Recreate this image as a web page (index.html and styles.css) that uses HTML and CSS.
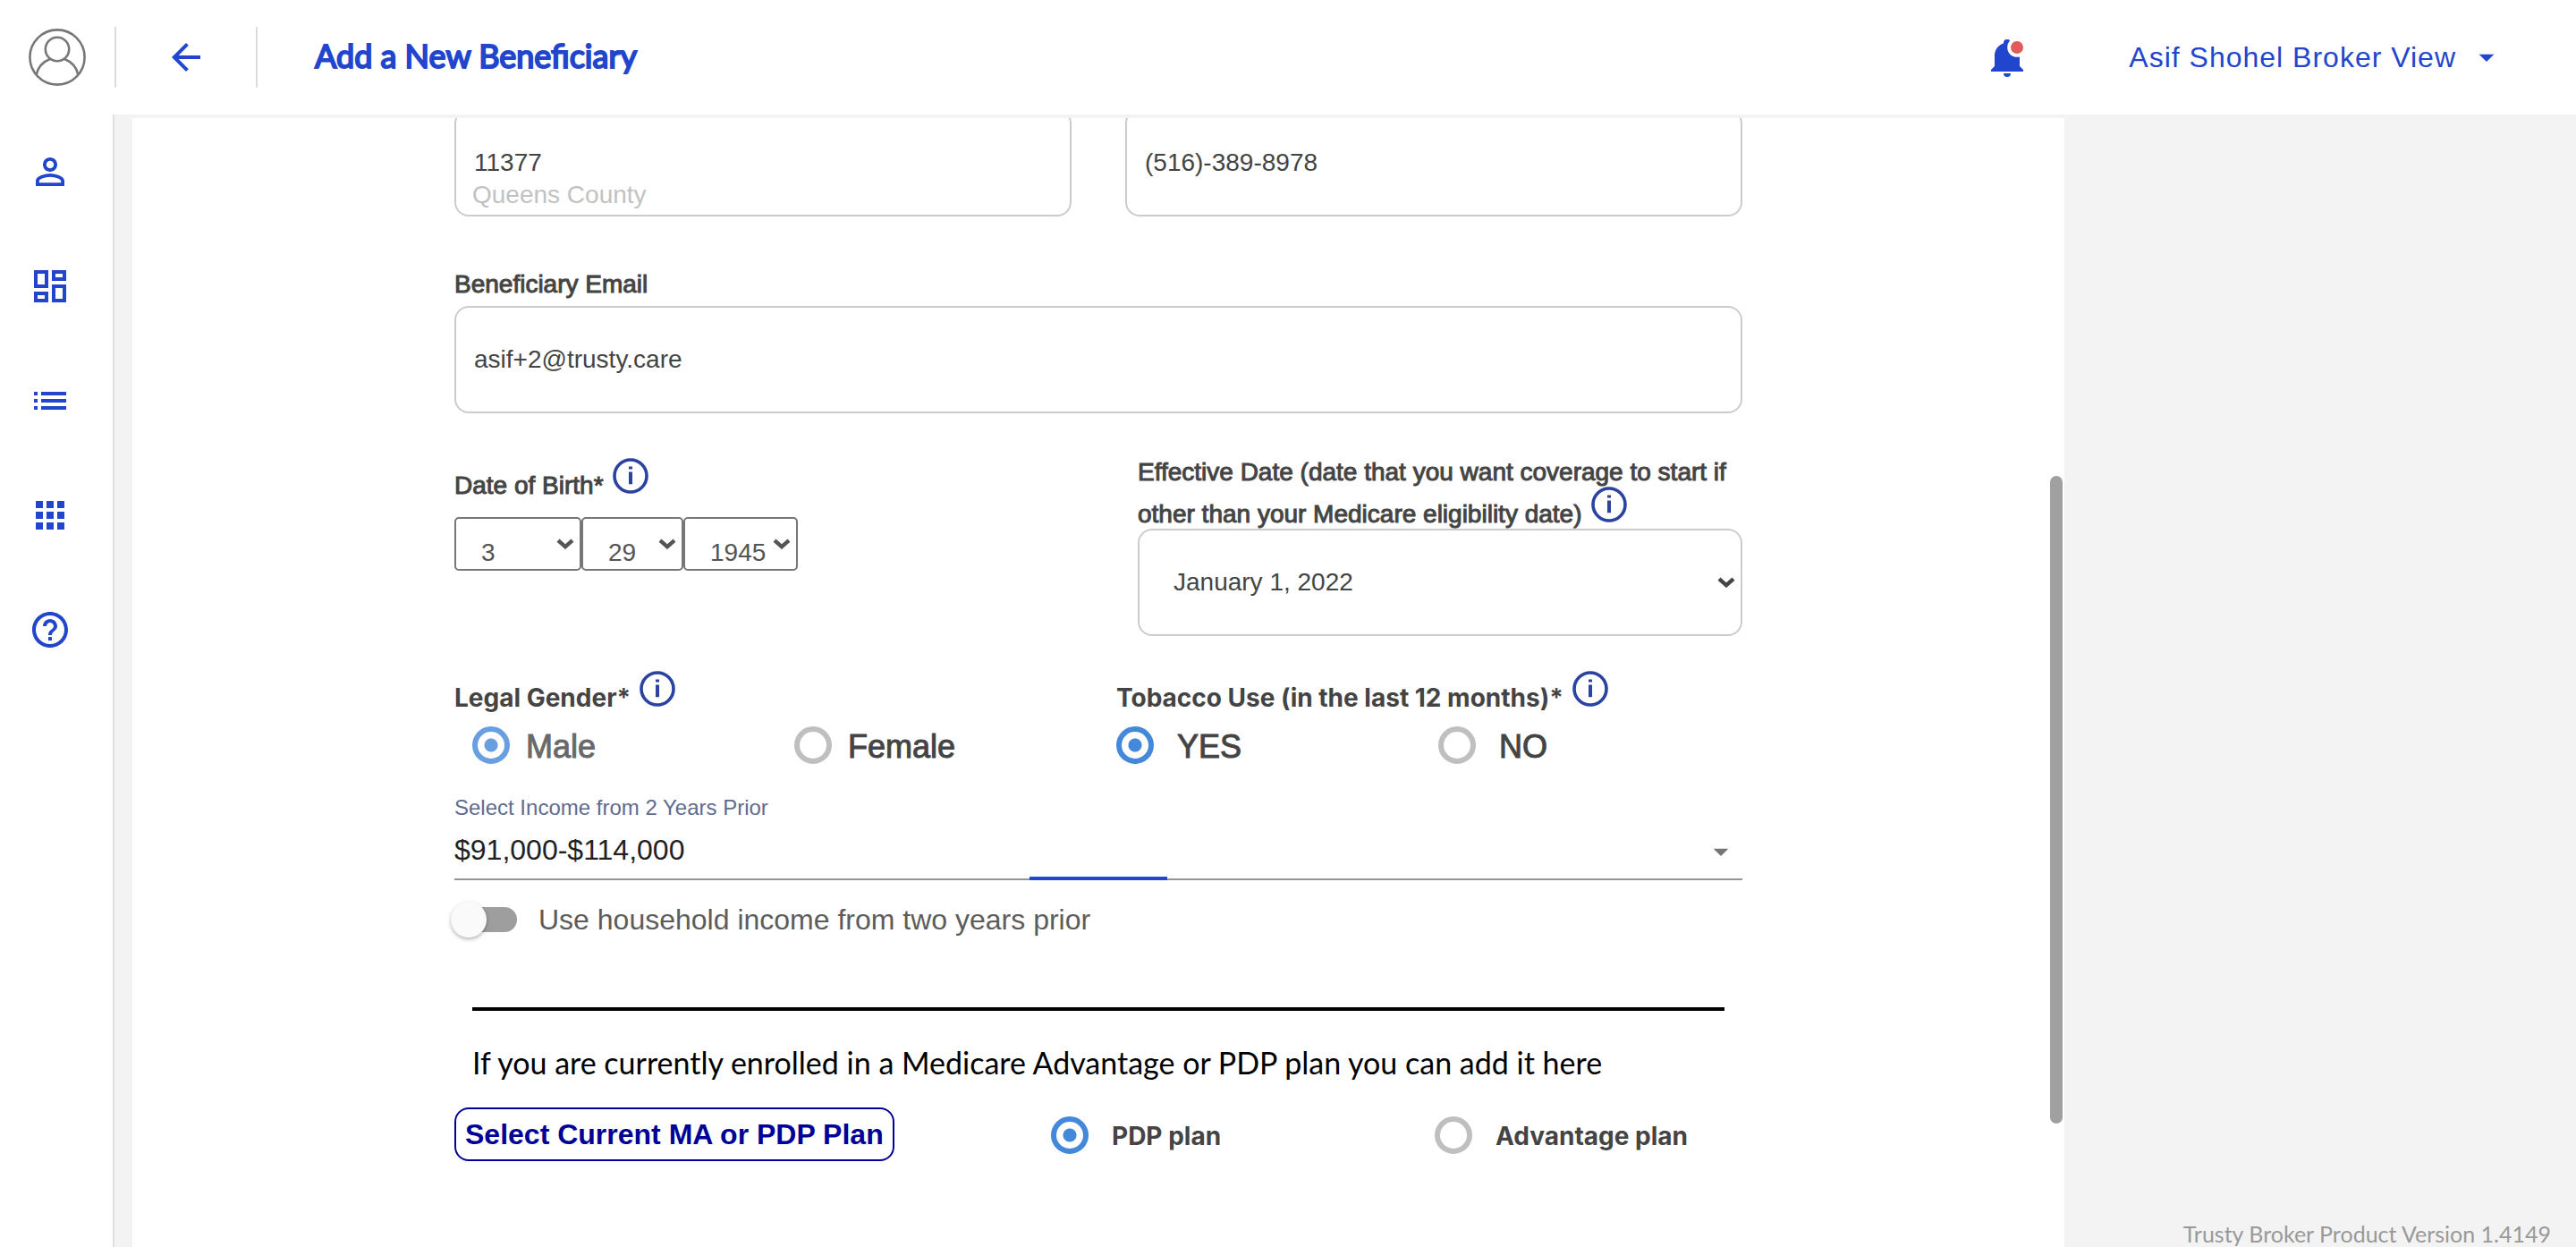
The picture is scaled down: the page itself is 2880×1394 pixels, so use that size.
FILE: index.html
```html
<!DOCTYPE html>
<html lang="en">
<head>
<meta charset="utf-8">
<title>Add a New Beneficiary</title>
<link rel="stylesheet" href="styles.css">
</head>
<body>
<svg class="symbols" aria-hidden="true">
  <symbol id="info" viewBox="0 0 40 40">
    <circle cx="20" cy="20" r="18" fill="none" stroke="currentColor" stroke-width="3.6"/>
    <path d="M18 9.6h4v3h-4zM18 15.4h4v13.8h-4z" fill="currentColor"/>
  </symbol>
  <symbol id="chevron" viewBox="0 0 20 12">
    <path d="M2 2.2l8 7 8-7" fill="none" stroke="currentColor" stroke-width="4.4"/>
  </symbol>
  <symbol id="caret" viewBox="0 0 24 24"><path d="M7 10l5 5 5-5z" fill="currentColor"/></symbol>
</svg>

<header class="topbar">
  <svg class="avatar" viewBox="0 0 64 64" role="img" aria-label="Profile" fill="none" stroke="#777" stroke-width="2.6">
    <circle cx="32" cy="32" r="30.6"/>
    <circle cx="32" cy="23" r="13.2"/>
    <path d="M8.6 51.5C10.4 43.6 16.2 37 24.4 33.8M55.4 51.5C53.6 43.6 47.8 37 39.6 33.8"/>
  </svg>
  <span class="divider"></span>
  <button class="icon-button back" type="button" aria-label="Back">
    <svg class="icon" viewBox="0 0 24 24"><path d="M20 11H7.83l5.59-5.59L12 4l-8 8 8 8 1.41-1.41L7.83 13H20v-2z"/></svg>
  </button>
  <span class="divider"></span>
  <h1 class="title">Add a New Beneficiary</h1>
  <button class="icon-button" type="button" aria-label="Notifications">
    <svg class="icon" viewBox="0 0 24 24">
      <path d="M21 19v1H3v-1l2-2v-6c0-3.1 2.03-5.83 5-6.71V4a2 2 0 0 1 4 0v.29c2.97.88 5 3.61 5 6.71v6l2 2zM14 21a2 2 0 0 1-4 0z"/>
      <circle cx="17.5" cy="6.5" r="5.4" fill="#fff"/>
      <circle cx="17.5" cy="6.5" r="3.5" fill="#e05c58"/>
    </svg>
  </button>
  <button class="account" type="button">Asif Shohel Broker View
    <svg class="caret" aria-hidden="true"><use href="#caret"/></svg>
  </button>
</header>

<div class="shell">
  <nav class="sidebar" aria-label="Main">
    <a href="#profile" aria-label="Profile"><svg class="icon" viewBox="0 0 24 24"><path d="M12 5.9c1.16 0 2.1.94 2.1 2.1s-.94 2.1-2.1 2.1S9.9 9.16 9.9 8s.94-2.1 2.1-2.1m0 9c2.97 0 6.1 1.46 6.1 2.1v1.1H5.9V17c0-.64 3.13-2.1 6.1-2.1M12 4C9.79 4 8 5.79 8 8s1.79 4 4 4 4-1.79 4-4-1.79-4-4-4zm0 9c-2.67 0-8 1.34-8 4v3h16v-3c0-2.66-5.33-4-8-4z"/></svg></a>
    <a href="#dashboard" aria-label="Dashboard"><svg class="icon" viewBox="0 0 24 24"><path d="M19 5v2h-4V5h4M9 5v6H5V5h4m10 8v6h-4v-6h4M9 17v2H5v-2h4M21 3h-8v6h8V3zM11 3H3v10h8V3zm10 8h-8v10h8V11zm-10 4H3v6h8v-6z"/></svg></a>
    <a href="#list" aria-label="List"><svg class="icon" viewBox="0 0 24 24"><path d="M3 13h2v-2H3v2zm0 4h2v-2H3v2zm0-8h2V7H3v2zm4 4h14v-2H7v2zm0 4h14v-2H7v2zM7 7v2h14V7H7z"/></svg></a>
    <a href="#apps" aria-label="Apps"><svg class="icon" viewBox="0 0 24 24"><path d="M4 8h4V4H4v4zm6 12h4v-4h-4v4zm-6 0h4v-4H4v4zm0-6h4v-4H4v4zm6 0h4v-4h-4v4zm6-10v4h4V4h-4zm-6 4h4V4h-4v4zm6 6h4v-4h-4v4zm0 6h4v-4h-4v4z"/></svg></a>
    <a href="#help" aria-label="Help"><svg class="icon" viewBox="0 0 24 24"><path d="M11 18h2v-2h-2v2zm1-16C6.48 2 2 6.48 2 12s4.480 10 10 10 10-4.480 10-10S17.520 2 12 2zm0 18c-4.410 0-8-3.590-8-8s3.590-8 8-8 8 3.590 8 8-3.590 8-8 8zm0-14c-2.210 0-4 1.790-4 4h2c0-1.100.900-2 2-2s2 .900 2 2c0 2-3 1.750-3 5h2c0-2.250 3-2.500 3-5 0-2.210-1.790-4-4-4z"/></svg></a>
  </nav>

  <main class="card">
    <form class="form">
      <div class="pair contact">
        <div class="with-note">
          <input class="box" type="text" value="11377" aria-label="Zip code">
          <span class="note">Queens County</span>
        </div>
        <input class="box" type="tel" value="(516)-389-8978" aria-label="Phone number">
      </div>

      <div class="email">
        <label class="label" for="email">Beneficiary Email</label>
        <input class="box" id="email" type="email" value="asif+2@trusty.care">
      </div>

      <div class="dates">
        <div class="birth">
          <label class="label" for="month">Date of Birth* <svg class="info"><use href="#info"/></svg></label>
          <div class="birth-selects">
            <span class="select month"><select id="month"><option>3</option></select><svg class="chevron"><use href="#chevron"/></svg></span>
            <span class="select day"><select aria-label="Day"><option>29</option></select><svg class="chevron"><use href="#chevron"/></svg></span>
            <span class="select year"><select aria-label="Year"><option>1945</option></select><svg class="chevron"><use href="#chevron"/></svg></span>
          </div>
        </div>
        <div class="effective">
          <label class="label" for="effective">Effective Date (date that you want coverage to start if other than your Medicare eligibility date) <svg class="info"><use href="#info"/></svg></label>
          <span class="select"><select class="box" id="effective"><option>January 1, 2022</option></select><svg class="chevron"><use href="#chevron"/></svg></span>
        </div>
      </div>

      <div class="choices">
        <div role="radiogroup" aria-labelledby="gender-label">
          <div class="group-label" id="gender-label">Legal Gender* <svg class="info"><use href="#info"/></svg></div>
          <div class="options">
            <label class="option faded"><input type="radio" name="gender" checked>Male</label>
            <label class="option"><input type="radio" name="gender">Female</label>
          </div>
        </div>
        <div role="radiogroup" aria-labelledby="tobacco-label">
          <div class="group-label inset" id="tobacco-label">Tobacco Use (in the last 12 months)* <svg class="info"><use href="#info"/></svg></div>
          <div class="options wide">
            <label class="option"><input type="radio" name="tobacco" checked>YES</label>
            <label class="option"><input type="radio" name="tobacco">NO</label>
          </div>
        </div>
      </div>

      <div class="income">
        <label for="income">Select Income from 2 Years Prior</label>
        <select id="income"><option>$91,000-$114,000</option></select>
        <svg class="caret" aria-hidden="true"><use href="#caret"/></svg>
        <span class="ripple"></span>
      </div>

      <label class="toggle"><input type="checkbox" role="switch">Use household income from two years prior</label>

      <hr class="rule">
      <p class="hint">If you are currently enrolled in a Medicare Advantage or PDP plan you can add it here</p>

      <div class="plans">
        <button class="plan-button" type="button">Select Current MA or PDP Plan</button>
        <label class="option small"><input type="radio" name="plan" checked>PDP plan</label>
        <label class="option small"><input type="radio" name="plan">Advantage plan</label>
      </div>
    </form>
    <span class="scroll-thumb"></span>
  </main>

  <footer class="version">Trusty Broker Product Version 1.4149</footer>
</div>
</body>
</html>
```
FILE: styles.css
```css
*,
*::before {
  box-sizing: border-box;
}

body {
  margin: 0;
  height: 100vh;
  display: flex;
  flex-direction: column;
  overflow: hidden;
  background: #f3f3f3;
  color: #444;
  font-family: "Liberation Sans", Arial, sans-serif;
  font-size: 28px;
  line-height: 32px;
}

button,
input,
select {
  margin: 0;
  font: inherit;
  color: inherit;
}

.symbols {
  position: absolute;
  width: 0;
  height: 0;
}

.icon {
  display: block;
  width: 48px;
  height: 48px;
  fill: #2146cd;
}

.caret {
  width: 40px;
  height: 40px;
}

/* Top bar */
.topbar {
  display: flex;
  align-items: center;
  flex: none;
  height: 128px;
  padding: 0 80px 0 32px;
  background: #fff;
}

.avatar {
  width: 64px;
  height: 64px;
  margin-right: 32px;
}

.divider {
  width: 2px;
  height: 68px;
  background: #dcdcdc;
}

.icon-button,
.account {
  padding: 0;
  border: 0;
  background: none;
}

.back {
  margin: 0 54px;
}

.title {
  flex: 1;
  margin: 0 0 4px 64px;
  color: #2146cd;
  font: 400 36px/44px Lato, sans-serif;
  -webkit-text-stroke: 2px currentColor;
}

.account {
  display: flex;
  align-items: center;
  gap: 14px;
  margin-left: 112px;
  color: #2146cd;
  font-size: 32px;
  letter-spacing: 1px;
}

/* Page shell */
.shell {
  display: flex;
  flex: 1;
  min-height: 0;
}

.sidebar {
  display: flex;
  flex-direction: column;
  width: 128px;
  border-right: 2px solid #e0e0e0;
  background: #fff;
}

.sidebar a {
  padding: 40px 32px;
}

.card {
  position: relative;
  width: 75%;
  margin: 4px 0 0 20px;
  overflow: hidden;
  background: #fff;
}

.scroll-thumb {
  position: absolute;
  top: 400px;
  right: 2px;
  width: 14px;
  height: 724px;
  border-radius: 7px;
  background: #a0a0a0;
}

.version {
  flex: 1;
  align-self: flex-end;
  padding-right: 28px;
  color: #999;
  font: 25px/30px Lato, sans-serif;
  text-align: right;
  white-space: nowrap;
}

/* Form */
.form {
  width: 66.6667%;
  margin: -10px auto 0;
}

.box {
  display: block;
  width: 100%;
  height: 120px;
  padding: 0 20px;
  border: 2px solid #ccc;
  border-radius: 16px;
  background: #fff;
}

.pair {
  display: grid;
  grid-template-columns: 1fr 1fr;
  gap: 60px;
}

.with-note {
  position: relative;
}

.note {
  position: absolute;
  left: 20px;
  bottom: 8px;
  color: #c2c2c2;
}

.label {
  display: block;
  -webkit-text-stroke: 1px currentColor;
}

.info {
  width: 40px;
  height: 40px;
  margin-left: 3px;
  color: #2a43a0;
  vertical-align: baseline;
}

.email {
  display: grid;
  gap: 8px;
  margin-top: 60px;
}

.dates {
  display: grid;
  grid-template-columns: 1fr 676px;
  margin-top: 50px;
}

.birth-selects {
  display: flex;
  margin-top: 19px;
}

.select {
  position: relative;
  display: block;
}

.select select {
  width: 100%;
  appearance: none;
}

.chevron {
  position: absolute;
  top: 50%;
  right: 8px;
  width: 20px;
  height: 12px;
  margin-top: -6px;
}

.birth .select {
  color: #555;
}

.birth select {
  height: 60px;
  padding: 20px 0 0 28px;
  border: 2px solid #767676;
  border-radius: 5px;
  background: #fff;
}

.month {
  width: 142px;
}

.day {
  width: 114px;
}

.year {
  width: 128px;
}

.effective .box {
  padding-left: 38px;
}

/* Radio groups */
.choices {
  display: grid;
  grid-template-columns: 1fr 1fr;
  margin-top: 39px;
}

.group-label {
  font-family: Inter, sans-serif;
  font-weight: 700;
}

.inset {
  padding-left: 20px;
}

.options {
  display: grid;
  grid-template-columns: 1fr 1fr;
  margin-top: 16px;
}

.option {
  display: flex;
  align-items: flex-start;
  gap: 18px;
  padding-left: 20px;
  font-size: 36px;
  line-height: 46px;
  -webkit-text-stroke: 1px currentColor;
}

.wide .option {
  gap: 26px;
}

.faded {
  opacity: 0.8;
}

.option input {
  flex: none;
  width: 42px;
  height: 42px;
  appearance: none;
  border: 6px solid #bfbfbf;
  border-radius: 50%;
}

.option input:checked {
  border-color: #4488d9;
  background: radial-gradient(circle, #4488d9 7px, #fff 8px);
}

/* Income */
.income {
  position: relative;
  margin-top: 31px;
}

.income label {
  display: block;
  color: #5f6b8f;
  font-size: 24px;
  line-height: 28px;
}

.income select {
  display: block;
  width: 100%;
  height: 67px;
  padding: 0;
  appearance: none;
  border: 0;
  border-bottom: 2px solid #949494;
  background: none;
  color: #222;
  font-size: 32px;
}

.income .caret {
  position: absolute;
  right: 4px;
  bottom: 12px;
  color: #757575;
}

.ripple {
  position: absolute;
  left: 50%;
  bottom: 0;
  width: 154px;
  height: 4px;
  margin-left: -77px;
  background: #2146cd;
}

.toggle {
  display: flex;
  align-items: center;
  gap: 24px;
  height: 40px;
  margin-top: 24px;
  color: #5c5c5c;
  font-size: 32px;
}

.toggle input {
  position: relative;
  width: 70px;
  height: 28px;
  appearance: none;
  border-radius: 14px;
  background: #9e9e9e;
}

.toggle input::before {
  content: "";
  position: absolute;
  left: -4px;
  top: -6px;
  width: 40px;
  height: 40px;
  border-radius: 50%;
  background: #fafafa;
  box-shadow: 0 2px 4px rgba(0, 0, 0, 0.3);
}

/* Current plan */
.rule {
  height: 4px;
  margin: 78px 20px 0;
  border: 0;
  background: #000;
}

.hint {
  margin: 38px 20px 0;
  color: #000;
  font: 34px/40px Lato, sans-serif;
}

.plans {
  display: grid;
  grid-template-columns: 647px 429px 1fr;
  align-items: end;
  margin-top: 30px;
}

.plan-button {
  justify-self: start;
  height: 60px;
  padding: 0 10px;
  border: 2px solid #000096;
  border-radius: 16px;
  background: #fff;
  color: #000096;
  font-size: 32px;
  font-weight: 700;
  white-space: nowrap;
}

.option.small {
  gap: 26px;
  padding-bottom: 6px;
  font: 700 28px/44px Inter, sans-serif;
  -webkit-text-stroke: 0;
}
```
